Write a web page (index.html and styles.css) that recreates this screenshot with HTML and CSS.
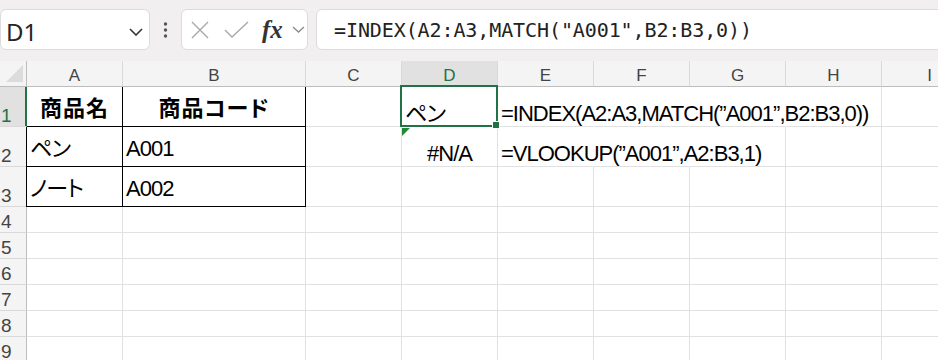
FILE: index.html
```html
<!DOCTYPE html>
<html lang="ja">
<head>
    <meta charset="UTF-8">
    <title>INDEX MATCH</title>
    <link rel="stylesheet" href="styles.css">
</head>
<body>
    <div class="topbar">
        <div class="namebox">
            <span class="ref">D1</span>
            <svg class="nb-arrow" width="14" height="8" viewBox="0 0 14 8"><path d="M1 1l6 6 6-6" fill="none" stroke="#333" stroke-width="1.6"/></svg>
        </div>
        <svg class="dots" width="5" height="16" viewBox="0 0 5 16"><circle cx="2.5" cy="2" r="1.7"/><circle cx="2.5" cy="8" r="1.7"/><circle cx="2.5" cy="14" r="1.7"/></svg>
        <div class="fbtns">
            <svg width="18" height="18" viewBox="0 0 18 18"><path d="M1 1l16 16M17 1L1 17" fill="none" stroke="#a8a8a8" stroke-width="1.4"/></svg>
            <svg class="ok" width="25" height="17" viewBox="0 0 25 17"><path d="M1 9l7 7L24 1" fill="none" stroke="#a8a8a8" stroke-width="1.4"/></svg>
            <span class="fx">fx</span>
            <svg class="fx-arrow" width="13" height="7" viewBox="0 0 13 7"><path d="M1 1l5.5 5 5.5-5" fill="none" stroke="#8a8a8a" stroke-width="1.3"/></svg>
        </div>
        <div class="formula">=INDEX(A2:A3,MATCH("A001",B2:B3,0))</div>
    </div>

    <div class="sheet">
        <div class="corner"></div>
        <div class="ch">A</div><div class="ch">B</div><div class="ch">C</div><div class="ch on">D</div><div class="ch">E</div><div class="ch">F</div><div class="ch">G</div><div class="ch">H</div><div class="ch">I</div>

        <div class="rh on">1</div>
        <div class="c t th">商品名</div><div class="c t th">商品コード</div><div class="c"></div>
        <div class="c sel">ペン<span class="handle"></span></div>
        <div class="c nr">=INDEX(A2:A3,MATCH(”A001”,B2:B3,0))</div><div class="c nr"></div><div class="c nr"></div><div class="c"></div><div class="c"></div>

        <div class="rh">2</div>
        <div class="c t l">ペン</div><div class="c t">A001</div><div class="c"></div>
        <div class="c err mid">#N/A</div>
        <div class="c nr">=VLOOKUP(”A001”,A2:B3,1)</div><div class="c nr"></div><div class="c"></div><div class="c"></div><div class="c"></div>

        <div class="rh">3</div>
        <div class="c t l">ノート</div><div class="c t">A002</div><div class="c"></div><div class="c"></div><div class="c"></div><div class="c"></div><div class="c"></div><div class="c"></div><div class="c"></div>

        <div class="rh">4</div><div class="c"></div><div class="c"></div><div class="c"></div><div class="c"></div><div class="c"></div><div class="c"></div><div class="c"></div><div class="c"></div><div class="c"></div>
        <div class="rh">5</div><div class="c"></div><div class="c"></div><div class="c"></div><div class="c"></div><div class="c"></div><div class="c"></div><div class="c"></div><div class="c"></div><div class="c"></div>
        <div class="rh">6</div><div class="c"></div><div class="c"></div><div class="c"></div><div class="c"></div><div class="c"></div><div class="c"></div><div class="c"></div><div class="c"></div><div class="c"></div>
        <div class="rh">7</div><div class="c"></div><div class="c"></div><div class="c"></div><div class="c"></div><div class="c"></div><div class="c"></div><div class="c"></div><div class="c"></div><div class="c"></div>
        <div class="rh">8</div><div class="c"></div><div class="c"></div><div class="c"></div><div class="c"></div><div class="c"></div><div class="c"></div><div class="c"></div><div class="c"></div><div class="c"></div>
        <div class="rh">9</div><div class="c"></div><div class="c"></div><div class="c"></div><div class="c"></div><div class="c"></div><div class="c"></div><div class="c"></div><div class="c"></div><div class="c"></div>
    </div>
</body>
</html>
```

FILE: styles.css
```css
* {
    box-sizing: border-box;
}
body {
    margin: 0;
    background: #fff;
    overflow: hidden;
    font-family: "Liberation Sans", "Noto Sans CJK JP", sans-serif;
    color: #000;
}

/* formula bar */
.topbar {
    display: flex;
    align-items: flex-start;
    height: 61px;
    padding-top: 9px;
    background: #f1efef;
}
.namebox {
    width: 150px;
    height: 41px;
    display: flex;
    align-items: center;
    justify-content: space-between;
    padding: 0 6px 0 5px;
    background: #fff;
    border: 1px solid #dcdcdc;
    border-radius: 6px;
}
.namebox .ref {
    font-family: "Noto Sans", sans-serif;
    font-size: 24px;
    color: #262626;
    padding-top: 4px;
}
.nb-arrow {
    margin-top: 4px;
}
.dots {
    margin: 13px 13px 0;
    fill: #555;
}
.fbtns {
    width: 127px;
    height: 41px;
    display: flex;
    align-items: center;
    padding-left: 9px;
    background: #fff;
    border: 1px solid #dcdcdc;
    border-radius: 6px;
}
.fbtns .ok {
    margin-left: 15px;
}
.fx {
    font-family: "Liberation Serif", serif;
    font-style: italic;
    font-weight: bold;
    font-size: 25px;
    color: #333;
    margin-left: 13px;
}
.fx-arrow {
    margin-left: 9px;
}
.formula {
    flex: 1;
    margin-left: 8px;
    margin-right: -20px;
    height: 41px;
    display: flex;
    align-items: center;
    padding-left: 17px;
    background: #fff;
    border: 1px solid #dcdcdc;
    border-radius: 6px;
    font-family: "DejaVu Sans Mono", monospace;
    font-size: 20px;
    letter-spacing: -0.1px;
    color: #222;
}

/* grid */
.sheet {
    display: grid;
    grid-template-columns: 27px 96px 183px repeat(7, 96px);
    grid-template-rows: 26px repeat(3, 40px) repeat(6, 26px);
}
.corner {
    background: #f4f4f4;
    border-right: 1px solid #bdbdbd;
    border-bottom: 1px solid #bdbdbd;
}
.corner::after {
    content: "";
    display: block;
    width: 0;
    height: 0;
    margin: 4px 0 0 6px;
    border-left: 17px solid transparent;
    border-bottom: 17px solid #dcdcdc;
}
.ch {
    display: flex;
    align-items: flex-end;
    justify-content: center;
    background: #f4f4f4;
    border-right: 1px solid #d9d9d9;
    border-bottom: 1px solid #bdbdbd;
    font-size: 17px;
    line-height: 20px;
    color: #444;
}
.ch.on {
    background: #e1e1e1;
    color: #217346;
}
.rh {
    display: flex;
    align-items: flex-end;
    padding-left: 1px;
    background: #f4f4f4;
    border-right: 1px solid #bdbdbd;
    border-bottom: 1px solid #d9d9d9;
    font-size: 19px;
    line-height: 20px;
    color: #444;
}
.rh.on {
    background: #e1e1e1;
    color: #217346;
    border-right-color: #217346;
    box-shadow: inset -1px 0 0 #217346;
}
.c {
    display: flex;
    align-items: flex-end;
    padding-left: 3px;
    border-right: 1px solid #e1e1e1;
    border-bottom: 1px solid #e1e1e1;
    font-size: 22px;
    line-height: 24px;
    letter-spacing: -1px;
    font-feature-settings: "palt";
    white-space: nowrap;
}
.c.t {
    border-right-color: #000;
    border-bottom-color: #000;
    padding-bottom: 5px;
}
.c.l {
    box-shadow: -1px 0 0 #000;
}
.c.th {
    justify-content: center;
    padding-left: 0;
    font-weight: bold;
    letter-spacing: 1px;
}
.c.nr {
    border-right-color: transparent;
}
.c.mid {
    justify-content: center;
    padding-left: 0;
}
.c.sel {
    position: relative;
}
.c.sel::after {
    content: "";
    position: absolute;
    top: -2px;
    left: -2px;
    right: -1px;
    bottom: -1px;
    border: 2px solid #217346;
}
.handle {
    position: absolute;
    right: -3px;
    bottom: -3px;
    width: 8px;
    height: 8px;
    background: #217346;
    border: 1px solid #fff;
    z-index: 1;
}
.c.err {
    position: relative;
}
.c.err::before {
    content: "";
    position: absolute;
    top: 1px;
    left: 0;
    border-top: 8px solid #1e8a36;
    border-right: 8px solid transparent;
}
```
